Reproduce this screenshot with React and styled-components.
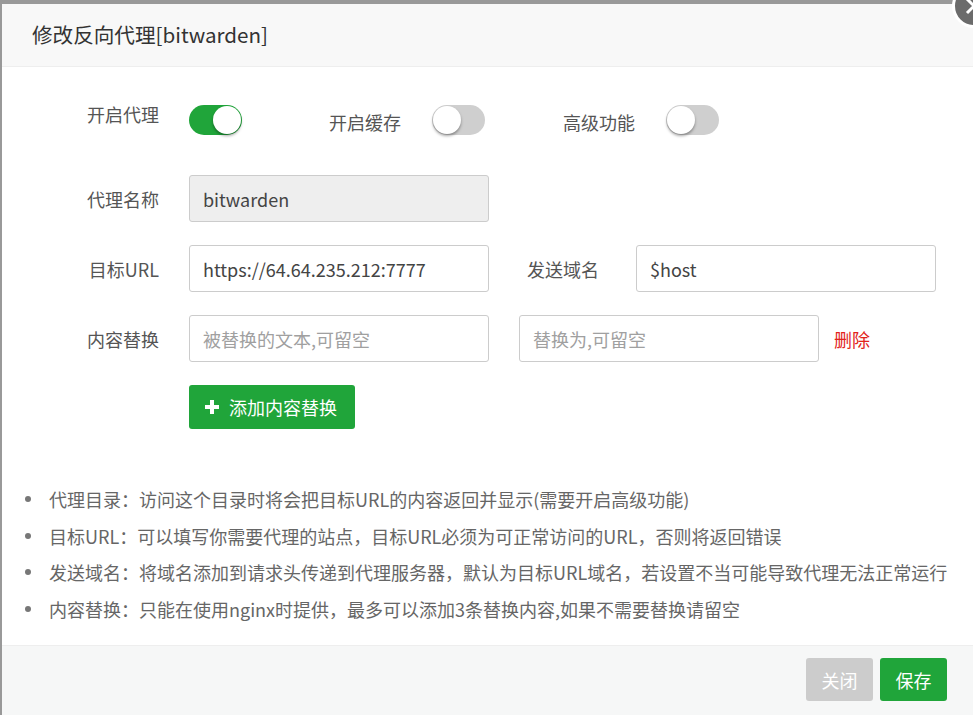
import React from "react";
import styled, { createGlobalStyle } from "styled-components";

const Global = createGlobalStyle`
  html, body { margin: 0; padding: 0; overflow: hidden; }
  body {
    background: #999;
    font-family: "Noto Sans CJK SC", "Noto Sans", sans-serif;
    width: 973px; height: 715px;
  }
  * { box-sizing: border-box; }
`;

const Dialog = styled.div`
  position: relative;
  margin: 4px 0 0 2px;
  width: 971px;
  height: 711px;
  background: #fff;
  display: flex;
  flex-direction: column;
`;

const Header = styled.div`
  height: 63px;
  flex-shrink: 0;
  background: #f8f8f8;
  border-bottom: 1px solid #eee;
  padding-left: 30px;
  display: flex;
  align-items: center;
  font-size: 20.6px;
  color: #333;
  padding-bottom: 3px;
`;

const CloseBtn = styled.div`
  position: absolute;
  left: 950px;
  top: -20px;
  width: 44px;
  height: 44px;
  border-radius: 50%;
  background: #6b6b6b;
  border: 3px solid #fff;
  display: flex;
  align-items: center;
  justify-content: center;
`;

const Body = styled.div`
  flex: 1;
  padding: 38px 0 0 57px;
  display: flex;
  flex-direction: column;
`;

const Row = styled.div`
  display: flex;
  align-items: center;
  margin-bottom: ${(p) => p.$mb || 23}px;
  height: ${(p) => p.$h || 47}px;
`;

const Label = styled.div`
  width: ${(p) => p.$w || 100}px;
  margin-left: ${(p) => p.$ml || 0}px;
  margin-right: ${(p) => p.$mr || 30}px;
  text-align: right;
  font-size: 18px;
  line-height: 18px;
  color: #555;
  align-self: ${(p) => (p.$top ? "flex-start" : "center")};
  padding-top: ${(p) => p.$pt || 0}px;
  white-space: nowrap;
`;

const Toggle = styled.div`
  width: 53px;
  height: 30px;
  border-radius: 15px;
  background: ${(p) => (p.$on ? "#20a53a" : "#cfcfcf")};
  position: relative;
  flex-shrink: 0;
  &::after {
    content: "";
    position: absolute;
    top: 1px;
    left: ${(p) => (p.$on ? "24px" : "1px")};
    width: 28px;
    height: 28px;
    border-radius: 50%;
    background: #fff;
    box-shadow: 0 2px 3px rgba(0, 0, 0, 0.35);
  }
`;

const Input = styled.div`
  width: 300px;
  height: 47px;
  margin-left: ${(p) => p.$ml || 0}px;
  border: 1px solid #ccc;
  border-radius: 3px;
  background: ${(p) => (p.$disabled ? "#eee" : "#fff")};
  padding-left: 13px;
  display: flex;
  align-items: center;
  font-size: 18px;
  color: ${(p) => (p.$ph ? "#a0a0a0" : "#444")};
  white-space: nowrap;
`;

const DeleteLink = styled.span`
  margin-left: 15px;
  color: #e2231a;
  font-size: 18px;
`;

const AddButton = styled.button`
  margin-left: 132px;
  width: 166px;
  height: 44px;
  border: none;
  border-radius: 3px;
  background: #20a53a;
  color: #fff;
  font-family: inherit;
  font-size: 18px;
  display: flex;
  align-items: center;
  gap: 10px;
  padding: 0 0 0 16px;
  align-self: flex-start;
  transform: translateX(-2px);
`;

const Notes = styled.ul`
  margin: 52px 0 0 -57px;
  padding: 0 0 0 23px;
  list-style: none;
  color: #666;
  font-size: 18px;
  line-height: 36.5px;
`;

const Note = styled.li`
  display: flex;
  align-items: center;
  white-space: nowrap;
  &::before {
    content: "";
    width: 6px;
    height: 6px;
    border-radius: 50%;
    background: #777;
    margin-right: 18px;
    flex-shrink: 0;
  }
`;

const Footer = styled.div`
  height: 70px;
  flex-shrink: 0;
  background: #f6f7f7;
  border-top: 1px solid #eee;
  display: flex;
  justify-content: flex-end;
  align-items: flex-start;
  padding: 12px 26px 0 0;
  gap: 7px;
`;

const FooterButton = styled.button`
  height: 43px;
  width: 67px;
  padding: 0;
  border: none;
  border-radius: 3px;
  background: ${(p) => (p.$primary ? "#20a53a" : "#ccc")};
  color: #fff;
  font-family: inherit;
  font-size: 18px;
`;

const Plus = () => (
  <svg width="14" height="14" viewBox="0 0 14 14">
    <path d="M5 0h4v5h5v4H9v5H5V9H0V5h5z" fill="#fff" />
  </svg>
);

const CloseX = () => (
  <svg width="18" height="18" viewBox="0 0 18 18">
    <path d="M2 2L16 16M16 2L2 16" stroke="#fff" strokeWidth="3" />
  </svg>
);

const notes = [
  "代理目录：访问这个目录时将会把目标URL的内容返回并显示(需要开启高级功能)",
  "目标URL：可以填写你需要代理的站点，目标URL必须为可正常访问的URL，否则将返回错误",
  "发送域名：将域名添加到请求头传递到代理服务器，默认为目标URL域名，若设置不当可能导致代理无法正常运行",
  "内容替换：只能在使用nginx时提供，最多可以添加3条替换内容,如果不需要替换请留空",
];

export default function App() {
  return (
    <>
      <Global />
      <Dialog>
        <Header>修改反向代理[bitwarden]</Header>
        <CloseBtn>
          <CloseX />
        </CloseBtn>
        <Body>
          <Row $h={30} $mb={40}>
            <Label $top>开启代理</Label>
            <Toggle $on />
            <Label $ml={59} $mr={31} $pt={4}>开启缓存</Label>
            <Toggle />
            <Label $ml={50} $mr={31} $pt={4}>高级功能</Label>
            <Toggle />
          </Row>
          <Row>
            <Label>代理名称</Label>
            <Input $disabled>bitwarden</Input>
          </Row>
          <Row>
            <Label>目标URL</Label>
            <Input>https://64.64.235.212:7777</Input>
            <Label $ml={10} $mr={37}>发送域名</Label>
            <Input>$host</Input>
          </Row>
          <Row>
            <Label>内容替换</Label>
            <Input $ph>被替换的文本,可留空</Input>
            <Input $ph $ml={30}>替换为,可留空</Input>
            <DeleteLink>删除</DeleteLink>
          </Row>
          <AddButton>
            <Plus />
            添加内容替换
          </AddButton>
          <Notes>
            {notes.map((n) => (
              <Note key={n}>{n}</Note>
            ))}
          </Notes>
        </Body>
        <Footer>
          <FooterButton>关闭</FooterButton>
          <FooterButton $primary>保存</FooterButton>
        </Footer>
      </Dialog>
    </>
  );
}
